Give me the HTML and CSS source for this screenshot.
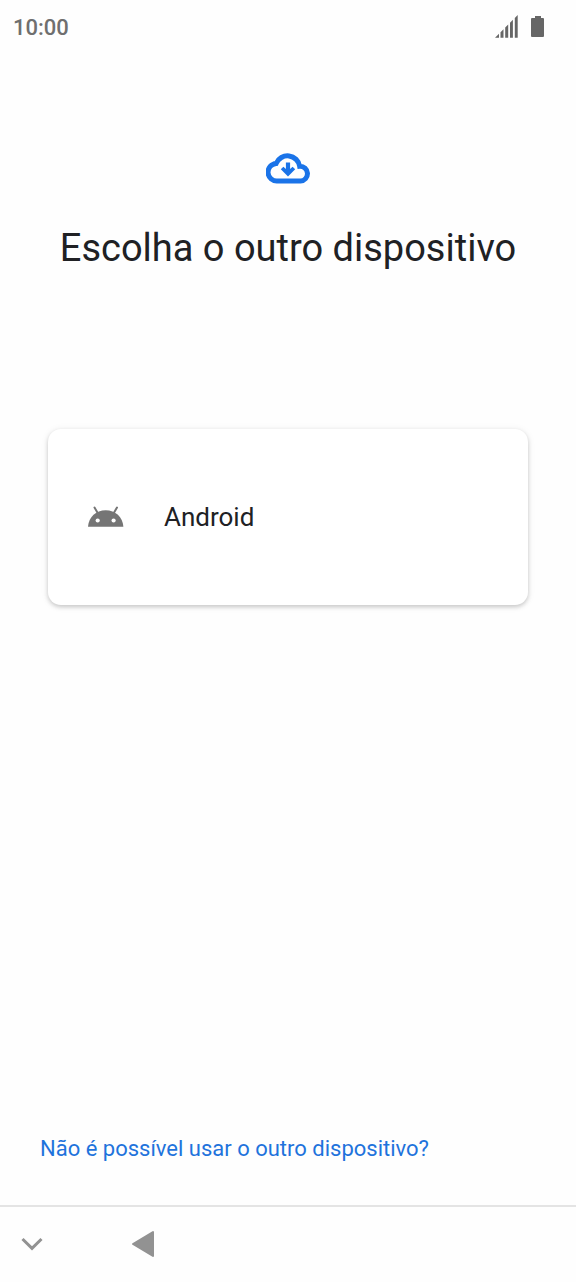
FILE: index.html
```html
<!DOCTYPE html>
<html lang="pt">
<head>
<meta charset="utf-8">
<meta name="viewport" content="width=device-width, initial-scale=1">
<title>Escolha o outro dispositivo</title>
<link rel="stylesheet" href="styles.css">
</head>
<body>
<div class="screen">
  <header class="status">
    <time class="clock">10:00</time>
    <div class="indicators">
      <svg class="signal" width="24" height="24" viewBox="0 0 24 24" aria-hidden="true">
        <path d="M0 22.700L4 18.700V22.700ZM5.500 17.200L8.500 14.200V22.700H5.500ZM10.200 12.500L13.200 9.500V22.700H10.200ZM15 7.700L17.900 4.800V22.700H15ZM19.800 2.900L22.700 0V22.700H19.800Z"/>
      </svg>
      <svg class="battery" width="14" height="24" viewBox="0 0 14 24" aria-hidden="true">
        <path d="M4 1H10V3H12Q13 3 13 4V21Q13 22 12 22H1Q0 22 0 21V4Q0 3 1 3H4Z"/>
      </svg>
    </div>
  </header>
  <main class="content">
    <svg class="cloud" width="44" height="32" viewBox="0 0 44 32" aria-hidden="true">
      <path class="cloud-line" d="M11.500 29A8.800 8.800 0 0 1 10.200 11.400A12.300 12.300 0 0 1 33.700 14.300A7.300 7.300 0 0 1 34.500 29Z"/>
      <path class="cloud-arrow" d="M19.900 10.500H24.100V17L26.600 14.700L29.200 17.300L22 24.500L14.800 17.300L17.400 14.700L19.900 17Z"/>
    </svg>
    <h1 class="title">Escolha o outro dispositivo</h1>
    <button class="option" type="button">
      <svg class="robot" width="36" height="24" viewBox="0 0 36 24" aria-hidden="true">
        <path class="antenna" d="M6.500 2.500L10 8.500M29 2.500L25.500 8.500"/>
        <path d="M0 21.700C.7 12 8 5.200 17.700 5.200S34.700 12 35.400 21.700Z"/>
        <circle class="eye" cx="9.700" cy="15.500" r="2.100"/>
        <circle class="eye" cx="25.600" cy="15.500" r="2.100"/>
      </svg>
      <span>Android</span>
    </button>
    <a class="help" href="#ajuda">Não é possível usar o outro dispositivo?</a>
  </main>
  <nav class="navbar" aria-label="Navegação">
    <button class="nav-button" type="button" aria-label="Ocultar">
      <svg width="24" height="24" viewBox="0 0 24 24" aria-hidden="true"><path class="chevron" d="M2.500 7L12 16.300L21.500 7"/></svg>
    </button>
    <button class="nav-button" type="button" aria-label="Voltar">
      <svg width="24" height="28" viewBox="0 0 24 28" aria-hidden="true"><path class="back" d="M2 14L22 2V26Z"/></svg>
    </button>
  </nav>
</div>
</body>
</html>
```
FILE: styles.css
```css
* {
  box-sizing: border-box;
}

body {
  margin: 0;
  background: #fefefe;
  color: #202124;
  font-family: Roboto, "Liberation Sans", sans-serif;
}

button {
  margin: 0;
  border: 0;
  background: none;
  color: inherit;
  font: inherit;
  cursor: pointer;
}

.screen {
  display: flex;
  flex-direction: column;
  min-height: 100vh;
}

.status {
  display: flex;
  align-items: center;
  justify-content: space-between;
  height: 54px;
  padding: 0 31px 0 13px;
}

.clock {
  color: #6f6f6f;
  font-size: 22px;
  font-weight: 500;
}

.indicators {
  display: flex;
  gap: 12px;
  fill: #666;
}

.content {
  display: flex;
  flex: 1;
  flex-direction: column;
  align-items: center;
  padding: 98px 40px 40px;
}

.cloud-line {
  fill: none;
  stroke: #1a73e8;
  stroke-width: 5;
}

.cloud-arrow {
  fill: #1a73e8;
}

.title {
  margin: 40px 0 156px;
  font-size: 38px;
  font-weight: 400;
  line-height: 49px;
  text-align: center;
}

.option {
  display: flex;
  align-items: center;
  align-self: stretch;
  gap: 40px;
  margin: 0 8px;
  padding: 72px 40px;
  border-radius: 13px;
  background: #fff;
  box-shadow: 0 2px 4px rgb(0 0 0 / 18%), 0 1px 8px rgb(0 0 0 / 7%);
  font-size: 26px;
  line-height: 32px;
  text-align: left;
}

.robot {
  fill: #757575;
}

.antenna {
  stroke: #757575;
  stroke-width: 2;
  stroke-linecap: round;
}

.eye {
  fill: #fff;
}

.help {
  align-self: flex-start;
  margin-top: auto;
  color: #1f73dc;
  font-size: 22px;
  line-height: 32px;
  text-decoration: none;
}

.navbar {
  display: flex;
  align-items: center;
  gap: 71px;
  height: 77px;
  padding: 0 12px 2px;
  border-top: 2px solid #e4e4e4;
}

.nav-button {
  display: flex;
  padding: 8px;
}

.chevron {
  fill: none;
  stroke: #929292;
  stroke-width: 3;
}

.back {
  fill: #929292;
  stroke: #929292;
  stroke-width: 2;
  stroke-linejoin: round;
}
```
